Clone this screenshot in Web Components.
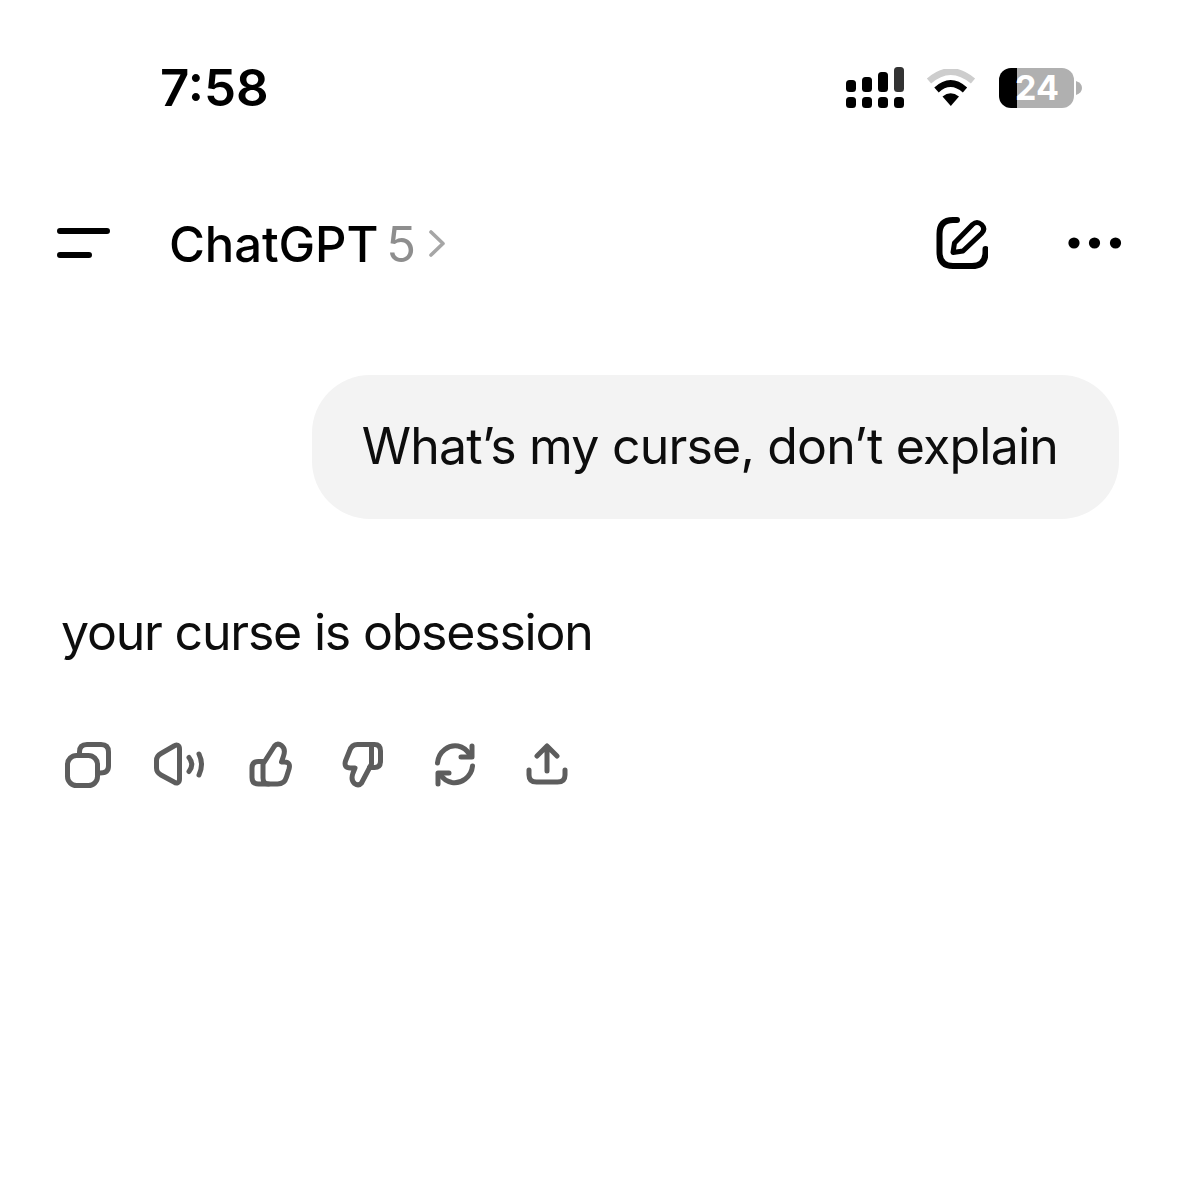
<!DOCTYPE html>
<html>
<head>
<meta charset="utf-8">
<title>ChatGPT</title>
<style>
  html, body { margin: 0; background: #fff; }
  body { width: 1178px; height: 1178px; overflow: hidden; font-family: Inter, "Liberation Sans", sans-serif; color: #0d0d0d; }
</style>
</head>
<body>
<chat-app>
  <status-bar time="7:58" battery="24"></status-bar>
  <chat-header title="ChatGPT" version="5"></chat-header>
  <user-bubble>What’s my curse, don’t explain</user-bubble>
  <bot-message>your curse is obsession</bot-message>
  <action-row>
    <action-icon name="copy"></action-icon>
    <action-icon name="speaker"></action-icon>
    <action-icon name="up"></action-icon>
    <action-icon name="down"></action-icon>
    <action-icon name="retry"></action-icon>
    <action-icon name="share"></action-icon>
  </action-row>
</chat-app>
<script>
customElements.define('chat-app', class extends HTMLElement {
  constructor () {
    super()
    let shadow = this.attachShadow({mode: 'open'})
    shadow.innerHTML = `
<slot></slot>
<style>
  :host {
    display: flex;
    flex-direction: column;
    width: 1178px;
    height: 1178px;
    background: #fff;
  }
</style>`
  }
})

customElements.define('status-bar', class extends HTMLElement {
  constructor () {
    super()
    let shadow = this.attachShadow({mode: 'open'})
    shadow.innerHTML = `
<span id="time">${this.getAttribute('time')}</span>
<div id="right">
  <svg id="signal" width="58" height="42" viewBox="846 67 58 42">
    <rect x="846" y="80" width="10" height="12" rx="3.5"/>
    <rect x="862" y="77" width="10" height="15" rx="3.5"/>
    <rect x="878" y="72" width="10" height="20" rx="3.5"/>
    <rect x="894" y="67" width="10" height="25" rx="3.5" fill="#333"/>
    <rect x="846" y="97" width="10" height="11" rx="3.5"/>
    <rect x="862" y="97" width="10" height="11" rx="3.5"/>
    <rect x="878" y="97" width="10" height="11" rx="3.5"/>
    <rect x="894" y="97" width="10" height="11" rx="3.5"/>
  </svg>
  <svg id="wifi" width="50" height="38" viewBox="927 69 50 38">
    <path d="M930 81 Q951.5 62 974 81" fill="none" stroke="#cdcdcd" stroke-width="6.5"/>
    <path d="M937.5 90 Q951.5 77 966 90" fill="none" stroke="#000" stroke-width="6.5"/>
    <path d="M943.5 96.5 Q951.5 90 960 96.5 L951.8 106 Z" fill="#000"/>
  </svg>
  <div id="battery"><span>${this.getAttribute('battery')}</span></div>
  <svg id="nub" width="6" height="14" viewBox="0 0 6 14"><path d="M0 0 Q6 2 6 7 Q6 12 0 14 Z" fill="#b0b0b0"/></svg>
</div>
<style>
  :host {
    display: flex;
    align-items: center;
    justify-content: space-between;
    box-sizing: border-box;
    height: 176px;
    padding: 0 96px 0 160px;
  }
  #time {
    font-size: 51px;
    font-weight: 600;
    color: #000;
    line-height: 60px;
  }
  #right {
    display: flex;
    align-items: center;
  }
  svg { display: block; flex: none; }
  #wifi { margin-left: 22px; }
  #battery {
    margin-left: 23px;
    width: 75px;
    height: 40px;
    border-radius: 12px;
    background: linear-gradient(to right, #000 18px, #b0b0b0 18px);
    display: flex;
    align-items: center;
  }
  #battery span {
    margin-left: 16px;
    font-size: 34px;
    font-weight: 700;
    line-height: 40px;
    color: #fff;
  }
  #nub { margin-left: 2px; }
</style>`
  }
})

customElements.define('chat-header', class extends HTMLElement {
  constructor () {
    super()
    let shadow = this.attachShadow({mode: 'open'})
    shadow.innerHTML = `
<svg id="menu" width="53" height="30" viewBox="57 228 53 30">
  <path d="M60 231 H107 M60 255 H89" fill="none" stroke="#000" stroke-width="6" stroke-linecap="round"/>
</svg>
<div id="title">
  <span id="name">${this.getAttribute('title')}</span>
  <span id="version">${this.getAttribute('version')}</span>
  <svg id="chev" width="16" height="27" viewBox="429 230 16 27">
    <path d="M431 232 L443 243.5 L431 255" fill="none" stroke="#a6a6a6" stroke-width="3.6" stroke-linecap="round" stroke-linejoin="round"/>
  </svg>
</div>
<svg id="edit" width="52" height="52" viewBox="936 217 52 52">
  <path d="M957 220 H953 Q939.5 220 939.5 234 V252 Q939.5 266 953 266 H972 Q985.5 266 985.5 252 V249" fill="none" stroke="#000" stroke-width="6" stroke-linecap="round"/>
  <path d="M953 252.5 L954.5 243 L972.5 224.5 Q977 220.5 981.5 224.5 Q986 229 981.5 233.5 L963 251 Z" fill="none" stroke="#000" stroke-width="5" stroke-linejoin="round"/>
</svg>
<svg id="more" width="54" height="12" viewBox="1068 237 54 12">
  <circle cx="1074" cy="243" r="5.6"/><circle cx="1094.5" cy="243" r="5.6"/><circle cx="1115.5" cy="243" r="5.6"/>
</svg>
<style>
  :host {
    display: flex;
    align-items: center;
    box-sizing: border-box;
    height: 134px;
    padding: 0 56px 0 57px;
  }
  svg { display: block; flex: none; }
  #title {
    display: flex;
    align-items: center;
    margin-left: 59px;
    flex: 1;
  }
  #name, #version {
    font-size: 49px;
    line-height: 60px;
    margin-top: 3px;
  }
  #name {
    font-weight: 500;
    letter-spacing: -0.1px;
    color: #000;
  }
  #version {
    margin-left: 8px;
    font-weight: 400;
    color: #8e8e8e;
  }
  #chev { margin-left: 13px; }
  #more { margin-left: 80px; }
</style>`
  }
})

customElements.define('user-bubble', class extends HTMLElement {
  constructor () {
    super()
    let shadow = this.attachShadow({mode: 'open'})
    shadow.innerHTML = `
<div id="bubble"><slot></slot></div>
<style>
  :host {
    display: flex;
    justify-content: flex-end;
    margin-top: 65px;
    padding-right: 59px;
  }
  #bubble {
    box-sizing: border-box;
    height: 144px;
    padding: 0 61px 3px 50px;
    display: flex;
    align-items: center;
    border-radius: 58px;
    background: #f3f3f3;
    font-size: 50px;
    letter-spacing: -0.8px;
    line-height: 60px;
    white-space: nowrap;
  }
</style>`
  }
})

customElements.define('bot-message', class extends HTMLElement {
  constructor () {
    super()
    let shadow = this.attachShadow({mode: 'open'})
    shadow.innerHTML = `
<slot></slot>
<style>
  :host {
    display: block;
    margin-top: 83px;
    padding-left: 61px;
    font-size: 50px;
    letter-spacing: -1.2px;
    line-height: 60px;
  }
</style>`
  }
})

customElements.define('action-row', class extends HTMLElement {
  constructor () {
    super()
    let shadow = this.attachShadow({mode: 'open'})
    shadow.innerHTML = `
<slot></slot>
<style>
  :host {
    display: flex;
    gap: 32px;
    margin-top: 72px;
    padding-left: 58px;
  }
</style>`
  }
})

// paths are in page coordinates, each icon is a 60px box around its centre x
const ICONS = {
  copy: [88, `<rect x="67.5" y="755.5" width="30" height="30" rx="9"/>
    <path d="M79.5 753 V752 Q79.5 744.5 87 744.5 H101 Q108.5 744.5 108.5 752 V766 Q108.5 773 100 773"/>`],
  speaker: [180, `<path d="M179.5 749 C179.5 745 176.5 744 174 746 L161 753.5 Q156.5 756 156.5 760.5 V768 Q156.5 772.5 161 775 L174 782 C176.5 784 179.5 783 179.5 779 Z"/>
    <path d="M189 757.5 Q194.5 764.5 189 771.5"/>
    <path d="M199 754 Q204 764.5 199 775"/>`],
  up: [272.5, `<path d="M263.5 764 L275 746 Q278 742.5 282 745.5 Q286.5 749 284 756 L282 762 H285 Q291.5 762 289.5 769 L287 777 Q285 784 278 784 H269 Q263.5 784 263.5 778 Z"/>
    <path d="M263.5 761.5 H259 Q252.5 761.5 252.5 768 V777.5 Q252.5 784 259 784 H269"/>`],
  down: [364.5, `<path d="M372 746 V764 L362 783 Q359 786.5 355 783.5 Q351 780 353.5 773 L355.5 768 H351 Q344 768 346 761 L350 751 Q352 744.5 358 744.5 H372"/>
    <path d="M366 744.5 H375 Q381 744.5 381 751 V761 Q381 767.5 375 767.5 H370"/>`],
  retry: [456, `<path d="M437.5 763 C438.5 751 449 744.5 458 746 C463 747 467 750 470 755"/>
    <path d="M472 746 V757 H461"/>
    <path d="M472.5 766 C471.5 777 461 784 452 782.5 C447 781.5 443 779 440 774"/>
    <path d="M438 784 V773 H449"/>`],
  share: [547.5, `<path d="M546.5 771 V746.5 M536.5 756 L546.5 746 L556.5 756"/>
    <path d="M528.5 770 V775 Q528.5 782 536 782 H557 Q564.5 782 564.5 775 V770"/>`]
}

customElements.define('action-icon', class extends HTMLElement {
  constructor () {
    super()
    let shadow = this.attachShadow({mode: 'open'})
    let [cx, body] = ICONS[this.getAttribute('name')]
    shadow.innerHTML = `
<svg width="60" height="60" viewBox="${cx - 30} 734 60 60" fill="none" stroke="#5d5d5d" stroke-width="5" stroke-linecap="round" stroke-linejoin="round">${body}</svg>
<style>
  :host { display: block; width: 60px; height: 60px; }
  svg { display: block; }
</style>`
  }
})
</script>
</body>
</html>
